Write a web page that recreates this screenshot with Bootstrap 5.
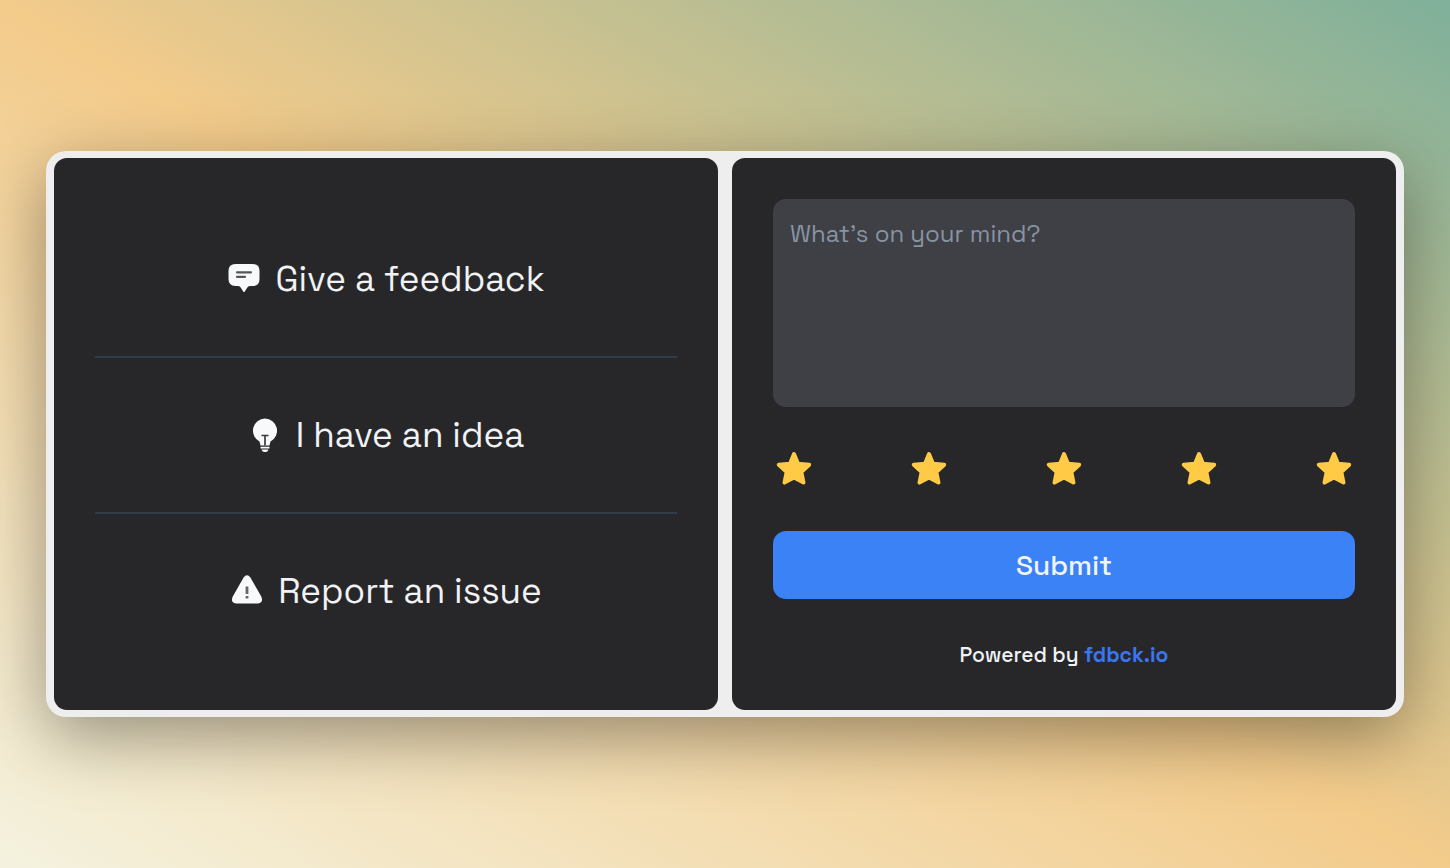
<!DOCTYPE html>
<html lang="en">
<head>
<meta charset="utf-8">
<meta name="viewport" content="width=device-width, initial-scale=1">
<title>Feedback widget</title>
<link href="https://cdn.jsdelivr.net/npm/bootstrap@5.3.0/dist/css/bootstrap.min.css" rel="stylesheet">
<style>
  body {
    font-family: "Space Grotesk", Inter, "Liberation Sans", sans-serif;
    background: linear-gradient(to top right, #f4f2df, #f3cb8b 50%, #7fb09a);
    color: #f1f2f4;
  }
  .stage { padding: 0 46px; }
  .showcase {
    background: #eee;
    border-radius: 20px;
    padding: 7px 8px;
    gap: 14px;
    box-shadow: 0 20px 68px rgba(0, 0, 0, .38);
  }
  .panel {
    flex: 1 1 0;
    background: #27272a;
    border-radius: 13px;
    padding: 41px;
  }
  .choice {
    color: inherit;
    font-size: 35px;
    line-height: 40px;
    gap: 14px;
    padding: 57px 0;
    border: 0;
    border-radius: 0;
  }
  .choice:hover, .choice:active { color: #fff !important; }
  .choice + .choice { border-top: 2px solid #323c48; }
  .choice:first-child { padding-top: 60px; }
  .choice:last-child { padding-bottom: 58px; }
  .message, .message:focus {
    height: 208px;
    resize: none;
    border: 0;
    border-radius: 13px;
    background: #3f3f46;
    color: #f1f2f4;
    padding: 17px;
    font-size: 24px;
    line-height: 36px;
  }
  .message::placeholder { color: #8794a3; }
  .rating { margin: 41px 0; }
  .send, .send:hover {
    background: #3b82f6;
    color: #f1f5fb;
    border: 0;
    border-radius: 13px;
    font-size: 28px;
    font-weight: 500;
    line-height: 40px;
    padding: 14px;
  }
  .credit { font-size: 21px; font-weight: 500; line-height: 28px; margin-top: 42px; }
  .credit a { color: #3b76f0; }
</style>
</head>
<body>
<main class="stage min-vh-100 d-flex flex-column justify-content-center">
  <div class="showcase d-flex">
    <section class="panel d-flex flex-column">
      <button type="button" class="choice btn d-flex align-items-center justify-content-center">
        <svg width="34" height="34" viewBox="0 0 34 34" aria-hidden="true"><path fill="#f8f9fb" d="M8.500 2H25.500Q32.500 2 32.500 9V17Q32.500 24 25.500 24H23Q21 24 20 26L17.800 29.500Q17 30.500 16.200 29.500L14 26Q13 24 11 24H8.500Q1.500 24 1.500 17V9Q1.500 2 8.500 2Z"/><path d="M10 10.300H24M10 14.800H18" stroke="#55565a" stroke-width="2.200" stroke-linecap="round"/></svg>
        <span>Give a feedback</span>
      </button>
      <button type="button" class="choice btn d-flex align-items-center justify-content-center">
        <svg width="34" height="34" viewBox="0 0 34 34" aria-hidden="true"><path fill="#f8f9fb" d="M17 .5A12.200 12.200 0 0 1 22.500 23.500L21.500 27.500H12.500L11.500 23.500A12.200 12.200 0 0 1 17 .5ZM12.500 28.800H21.500V30.500H12.500ZM13.500 31.500H20.500Q20 33.900 18 33.900H16Q14 33.900 13.500 31.500Z"/><path d="M13.500 17.500H20.500M17 17.500V27.500" stroke="#3a3a3d" stroke-width="1.700"/></svg>
        <span>I have an idea</span>
      </button>
      <button type="button" class="choice btn d-flex align-items-center justify-content-center">
        <svg width="34" height="34" viewBox="0 0 34 34" aria-hidden="true"><path fill="#f8f9fb" d="M13.600 3.500Q17 -1 20.400 3.500L31.500 23Q33.500 29 28 29.500H6Q.5 29 2.500 23Z"/><path d="M17 12.500V20M17 22V24.500" stroke="#66676b" stroke-width="2.800"/></svg>
        <span>Report an issue</span>
      </button>
    </section>
    <form class="panel d-flex flex-column" onsubmit="return false">
      <textarea class="message form-control shadow-none" aria-label="Your feedback" placeholder="What’s on your mind?"></textarea>
      <div class="rating d-flex justify-content-between" id="rating"></div>
      <button type="submit" class="send btn w-100">Submit</button>
      <p class="credit text-center mb-0">Powered by <a href="#" class="fw-bold text-decoration-none">fdbck.io</a></p>
    </form>
  </div>
</main>
<script src="https://cdn.jsdelivr.net/npm/bootstrap@5.3.0/dist/js/bootstrap.bundle.min.js"></script>
<script>
  for (let i = 1; i <= 5; i++) {
    document.getElementById('rating').insertAdjacentHTML('beforeend',
      `<button type="button" class="btn border-0 p-0 d-flex" aria-label="${i} of 5 stars"><svg width="42" height="42" viewBox="0 0 42 42" aria-hidden="true"><path fill="#ffca45" stroke="#ffca45" stroke-width="4" stroke-linejoin="round" d="M21 6L25 15.800L36.200 16.700L28.300 23.900L30.500 34.600L21 29.500L11.500 34.600L13.700 23.900L5.800 16.700L17 15.800Z"/></svg></button>`);
  }
</script>
</body>
</html>
